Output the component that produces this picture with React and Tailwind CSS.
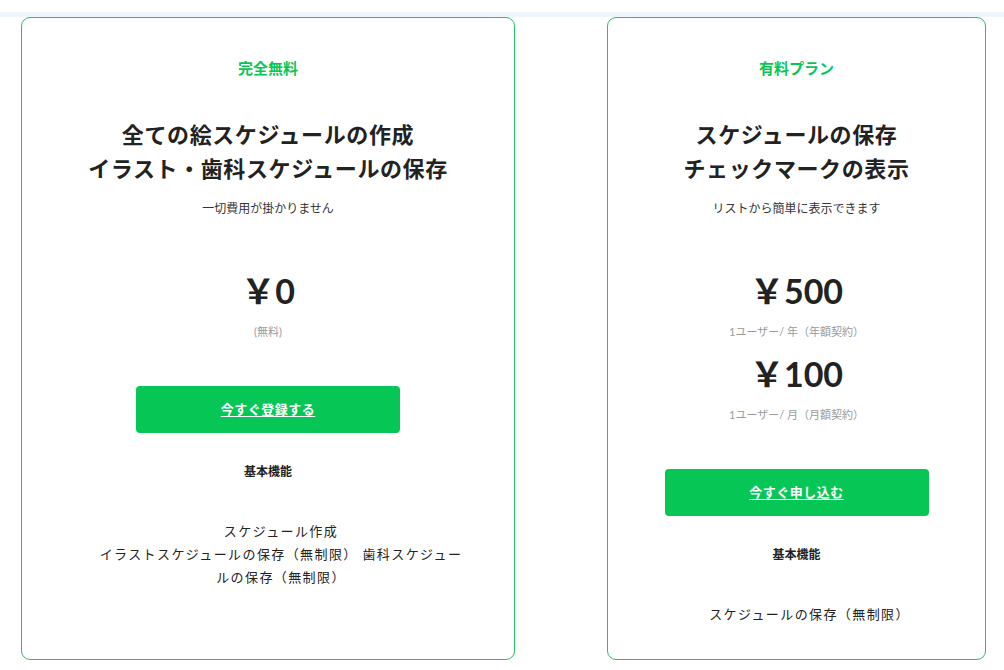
import React from "react";

const plans = [
  {
    id: "free",
    width: "w-[494px]",
    listWidth: "w-[398px]",
    label: "完全無料",
    title: ["全ての絵スケジュールの作成", "イラスト・歯科スケジュールの保存"],
    lead: "一切費用が掛かりません",
    prices: [{ amount: "0", note: "(無料)" }],
    cta: "今すぐ登録する",
    features: ["スケジュール作成", "イラストスケジュールの保存（無制限） 歯科スケジュールの保存（無制限）"],
  },
  {
    id: "paid",
    width: "w-[379px]",
    listWidth: "w-[340px]",
    label: "有料プラン",
    title: ["スケジュールの保存", "チェックマークの表示"],
    lead: "リストから簡単に表示できます",
    prices: [
      { amount: "500", note: "1ユーザー/ 年（年額契約）" },
      { amount: "100", note: "1ユーザー/ 月（月額契約）" },
    ],
    cta: "今すぐ申し込む",
    features: ["スケジュールの保存（無制限）"],
  },
];

const PlanCard = ({ plan }) => {
  return (
    <div
      className={`${plan.width} h-[643px] shrink-0 rounded-[9px] border border-[#22c55e] bg-white pt-[39px] text-center`}
    >
      <p className="text-[15px] leading-[22px] font-bold text-[#06c755]">{plan.label}</p>

      <h2 className="mt-[39px] text-[22px] leading-[34px] font-bold tracking-[0.6px] text-[#222]">
        {plan.title.map((line) => (
          <span key={line} className="block">
            {line}
          </span>
        ))}
      </h2>
      <p className="mt-[13px] text-[12px] leading-[20px] text-[#333]">{plan.lead}</p>

      <div className="mt-[51px]">
        {plan.prices.map((price, idx) => (
          <div key={price.amount} className={idx > 0 ? "mt-[12px]" : ""}>
            <p className="text-[34px] leading-[42px] font-bold text-[#222]">
              ￥{price.amount}
            </p>
            <p className="mt-[11px] text-[11px] leading-[18px] text-[#9a9a9a]">{price.note}</p>
          </div>
        ))}
      </div>

      <a
        href="#"
        className="mx-auto mt-[45px] flex h-[47px] w-[264px] items-center justify-center rounded-[4px] bg-[#06c755] text-[13px] font-bold tracking-[0.5px] text-white underline underline-offset-2"
      >
        {plan.cta}
      </a>

      <p className="mt-[29px] text-[12px] leading-[20px] font-bold text-[#222]">基本機能</p>

      <ul className={`mx-auto mt-[38px] ${plan.listWidth} pl-[26px] text-[13px] leading-[23px] tracking-[1.4px] text-[#222]`}>
        {plan.features.map((feature) => (
          <li key={feature}>{feature}</li>
        ))}
      </ul>
    </div>
  );
};

export default function App() {
  return (
    <div
      className="min-h-[670px] bg-white pt-[12px]"
      style={{ fontFamily: 'Lato, "Noto Sans CJK JP", sans-serif' }}
    >
      <div className="h-[5px] bg-[#eef5fb]" />
      <div className="flex gap-[92px] pl-[21px]">
        {plans.map((plan) => (
          <PlanCard key={plan.id} plan={plan} />
        ))}
      </div>
    </div>
  );
}
